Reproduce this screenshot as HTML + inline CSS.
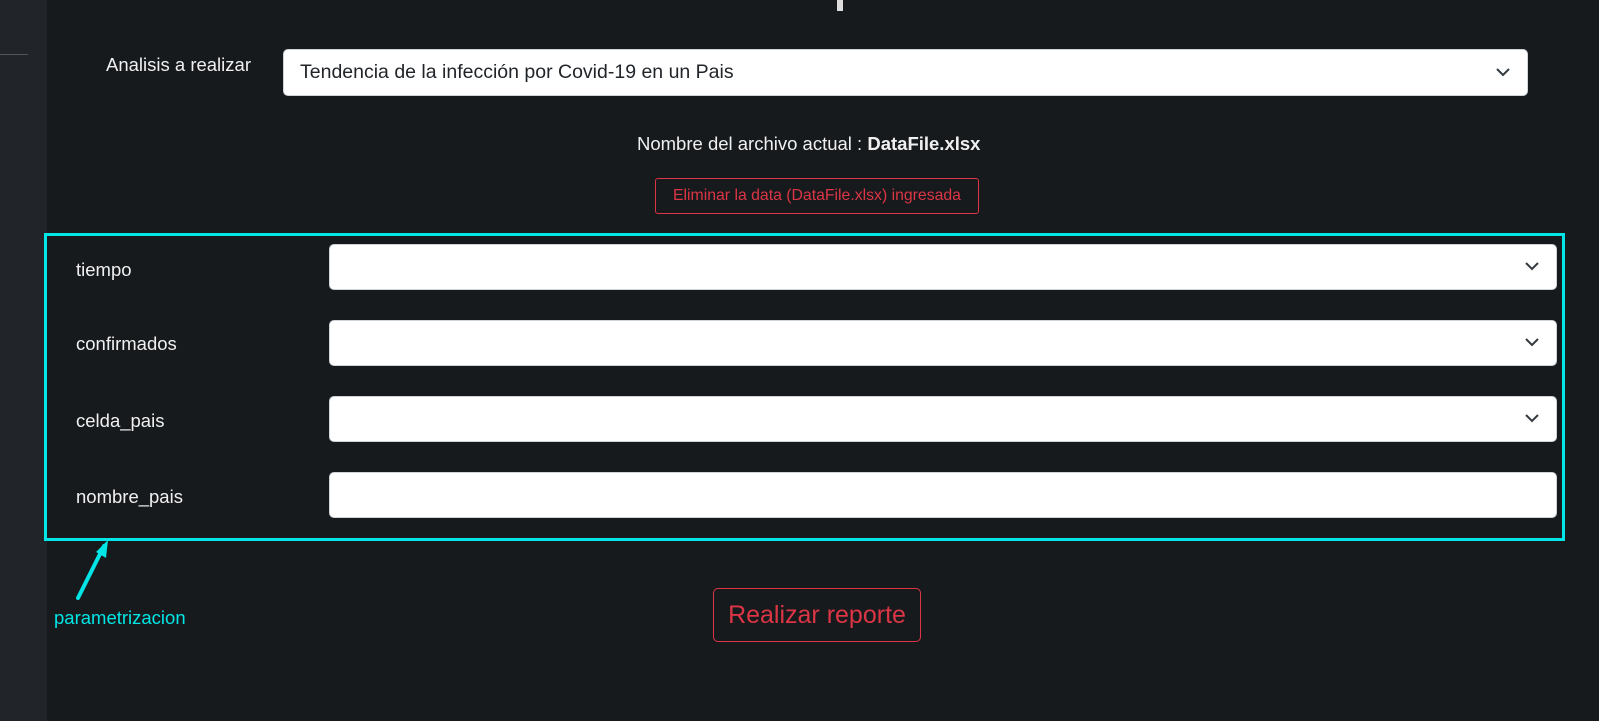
<!DOCTYPE html>
<html><head><meta charset="utf-8"><style>
*{box-sizing:border-box;margin:0;padding:0}
body{width:1599px;height:721px;background:#171a1d;font-family:"Liberation Sans",sans-serif;position:relative;overflow:hidden;color:#e9ecef}
.side{position:absolute;left:0;top:0;width:47px;height:721px;background:#212429}
.side i{position:absolute;left:0;top:54px;width:28px;height:1px;background:#555}
.abs{position:absolute}
.sel{position:absolute;background:#fff;border:1px solid #ced4da;border-radius:5px;color:#212529;font-size:19.5px;padding-left:16px;display:flex;align-items:center}
.sel svg{position:absolute;right:17px;top:50%;margin-top:-5px}
.lbl{position:absolute;font-size:18.5px;color:#f0f0f0}
</style></head><body>
<div class="side"><i></i></div>
<div class="abs" style="left:837px;top:0;width:6px;height:11px;background:#ddd"></div>
<div class="lbl" style="left:106px;top:54px">Analisis a realizar</div>
<div class="sel" style="left:283px;top:49px;width:1245px;height:47px">Tendencia de la infección por Covid-19 en un Pais<svg width="14" height="9" viewBox="0 0 14 9"><path d="M1 1l6 6 6-6" fill="none" stroke="#343a40" stroke-width="2"/></svg></div>
<div class="lbl" style="left:637px;top:133px">Nombre del archivo actual : <b>DataFile.xlsx</b></div>
<div class="abs" style="left:655px;top:178px;width:324px;height:36px;border:1px solid #dc3545;border-radius:3px;color:#dc3545;font-size:15.8px;text-align:center;line-height:34px">Eliminar la data (DataFile.xlsx) ingresada</div>
<div class="abs" style="left:44px;top:233px;width:1521px;height:308px;border:3px solid #00e5e5"></div>
<div class="lbl" style="left:76px;top:259px">tiempo</div>
<div class="lbl" style="left:76px;top:333px">confirmados</div>
<div class="lbl" style="left:76px;top:410px">celda_pais</div>
<div class="lbl" style="left:76px;top:486px">nombre_pais</div>
<div class="sel" style="left:329px;top:244px;width:1228px;height:46px"><svg width="14" height="9" viewBox="0 0 14 9"><path d="M1 1l6 6 6-6" fill="none" stroke="#343a40" stroke-width="2"/></svg></div>
<div class="sel" style="left:329px;top:320px;width:1228px;height:46px"><svg width="14" height="9" viewBox="0 0 14 9"><path d="M1 1l6 6 6-6" fill="none" stroke="#343a40" stroke-width="2"/></svg></div>
<div class="sel" style="left:329px;top:396px;width:1228px;height:46px"><svg width="14" height="9" viewBox="0 0 14 9"><path d="M1 1l6 6 6-6" fill="none" stroke="#343a40" stroke-width="2"/></svg></div>
<div class="sel" style="left:329px;top:472px;width:1228px;height:46px"></div>
<svg class="abs" style="left:70px;top:538px" width="40" height="66"><path d="M8 60L34 8" stroke="#00e5e5" stroke-width="4" stroke-linecap="round"/><path d="M38 2L26 14 36 20Z" fill="#00e5e5"/></svg>
<div class="abs" style="left:54px;top:607px;color:#00e5e5;font-size:18.5px">parametrizacion</div>
<div class="abs" style="left:713px;top:588px;width:208px;height:54px;border:1px solid #dc3545;border-radius:5px;color:#dc3545;font-size:25px;text-align:center;line-height:52px">Realizar reporte</div>
</body></html>
